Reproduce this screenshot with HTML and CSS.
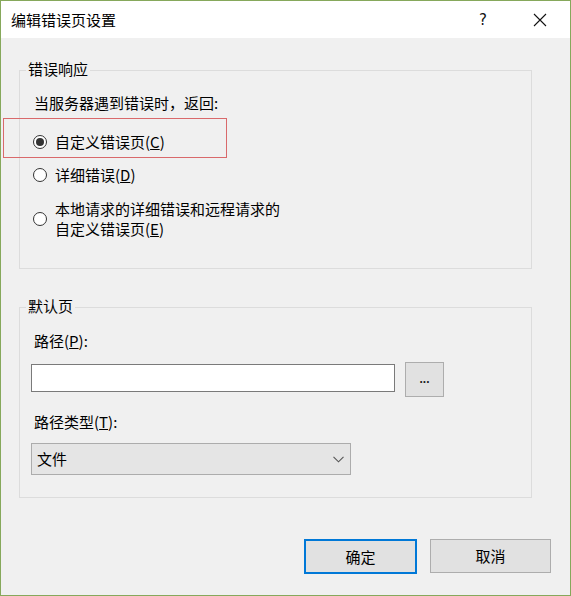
FILE: index.html
```html
<!DOCTYPE html>
<html lang="zh-CN">
<head>
<meta charset="utf-8">
<title>编辑错误页设置</title>
<link rel="stylesheet" href="styles.css">
</head>
<body>
<div class="window">
  <div class="titlebar">
    <div class="title">编辑错误页设置</div>
    <div class="tb-help">?</div>
    <div class="tb-close">
      <svg width="14" height="14" viewBox="0 0 14 14"><path d="M1 1 L13 13 M13 1 L1 13" stroke="#111" stroke-width="1.1" fill="none"/></svg>
    </div>
  </div>

  <div class="group group-resp">
    <div class="group-title">错误响应</div>
    <div class="intro">当服务器遇到错误时，返回:</div>
    <div class="radio-row r1">
      <span class="radio checked"><span class="dot"></span></span>
      <span class="rtext">自定义错误页(<u>C</u>)</span>
    </div>
    <div class="radio-row r2">
      <span class="radio"></span>
      <span class="rtext">详细错误(<u>D</u>)</span>
    </div>
    <div class="radio-row r3">
      <span class="radio"></span>
      <span class="rtext">本地请求的详细错误和远程请求的<br>自定义错误页(<u>E</u>)</span>
    </div>
  </div>

  <div class="group group-default">
    <div class="group-title">默认页</div>
    <div class="field-label first">路径(<u>P</u>):</div>
    <div class="input-row">
      <div class="input"></div>
      <div class="browse">...</div>
    </div>
    <div class="field-label second">路径类型(<u>T</u>):</div>
    <div class="select">
      <span>文件</span>
      <svg class="chev" width="11" height="7" viewBox="0 0 11 7"><path d="M0.5 0.8 L5.5 5.8 L10.5 0.8" stroke="#555" stroke-width="1.1" fill="none"/></svg>
    </div>
  </div>

  <div class="buttons">
    <div class="btn btn-ok">确定</div>
    <div class="btn btn-cancel">取消</div>
  </div>

  <div class="highlight"></div>
</div>
</body>
</html>
```

FILE: styles.css
```css
html, body {
  margin: 0;
  padding: 0;
  background: #f0f0f0;
}

body {
  font-family: "Noto Sans CJK SC", "Noto Sans", "Liberation Sans", sans-serif;
  font-size: 15px;
  color: #000;
}

.window {
  position: relative;
  width: 571px;
  height: 596px;
  box-sizing: border-box;
  border: 1px solid #86a85b;
  background: #f0f0f0;
  display: flex;
  flex-direction: column;
}

.titlebar {
  height: 37px;
  background: #fff;
  display: flex;
  align-items: center;
  flex: none;
}

.title {
  padding-left: 10px;
  font-size: 15px;
  line-height: 20px;
  flex: 1;
}

.tb-help {
  width: 30px;
  text-align: center;
  font-family: "DejaVu Sans", "Liberation Sans", sans-serif;
  font-size: 15px;
  color: #111;
  line-height: 20px;
}

.tb-close {
  width: 30px;
  margin-left: 27px;
  margin-right: 15px;
  display: flex;
  justify-content: center;
  align-items: center;
}

.group {
  box-sizing: border-box;
  width: 513px;
  margin-left: 18px;
  border: 1px solid #dcdcdc;
  flex: none;
}

.group-resp {
  margin-top: 32px;
  height: 199px;
}

.group-default {
  margin-top: 38px;
  height: 191px;
}

.group-title {
  width: fit-content;
  margin: -12px 0 0 6px;
  padding: 0 2px;
  line-height: 20px;
  height: 20px;
  background: #f0f0f0;
}

.intro {
  margin: 14px 0 0 14px;
  line-height: 20px;
}

.radio-row {
  display: flex;
  align-items: center;
  margin-left: 13px;
  line-height: 20px;
}

.r1 { margin-top: 19px; }
.r2 { margin-top: 13px; }
.r3 { margin-top: 14px; }

.radio {
  width: 14px;
  height: 14px;
  box-sizing: border-box;
  border: 1px solid #333;
  border-radius: 50%;
  background: #fff;
  display: flex;
  align-items: center;
  justify-content: center;
  flex: none;
}

.dot {
  width: 8px;
  height: 8px;
  border-radius: 50%;
  background: #333;
}

.rtext {
  margin-left: 8px;
}

.field-label {
  margin-left: 14px;
  line-height: 20px;
}

.field-label.first { margin-top: 15px; }
.field-label.second { margin-top: 15px; }

.input-row {
  display: flex;
  align-items: flex-start;
  margin: 11px 0 0 11px;
}

.input {
  width: 364px;
  height: 28px;
  box-sizing: border-box;
  margin-top: 2px;
  border: 1px solid #7a7a7a;
  background: #fff;
}

.browse {
  width: 39px;
  height: 35px;
  box-sizing: border-box;
  margin-left: 10px;
  border: 1px solid #adadad;
  background: #e1e1e1;
  display: flex;
  align-items: center;
  justify-content: center;
  font-family: "Liberation Sans", sans-serif;
  font-size: 12px;
  font-weight: bold;
  color: #222;
  padding-bottom: 2px;
}

.select {
  width: 320px;
  height: 32px;
  box-sizing: border-box;
  margin: 11px 0 0 11px;
  border: 1px solid #acacac;
  background: #e5e5e5;
  display: flex;
  align-items: center;
  justify-content: space-between;
  padding: 0 5px 0 5px;
  line-height: 20px;
}

.chev {
  margin-right: 1px;
}

.buttons {
  display: flex;
  justify-content: flex-end;
  align-items: flex-start;
  gap: 13px;
  margin: 41px 19px 0 0;
  flex: none;
}

.btn {
  box-sizing: border-box;
  background: #e1e1e1;
  display: flex;
  align-items: center;
  justify-content: center;
  line-height: 20px;
}

.btn-ok {
  width: 113px;
  height: 35px;
  border: 2px solid #0078d7;
}

.btn-cancel {
  width: 121px;
  height: 34px;
  border: 1px solid #adadad;
}

.highlight {
  position: absolute;
  left: 2px;
  top: 117px;
  width: 224px;
  height: 40px;
  box-sizing: border-box;
  border: 1px solid #d9696b;
  pointer-events: none;
}
```
